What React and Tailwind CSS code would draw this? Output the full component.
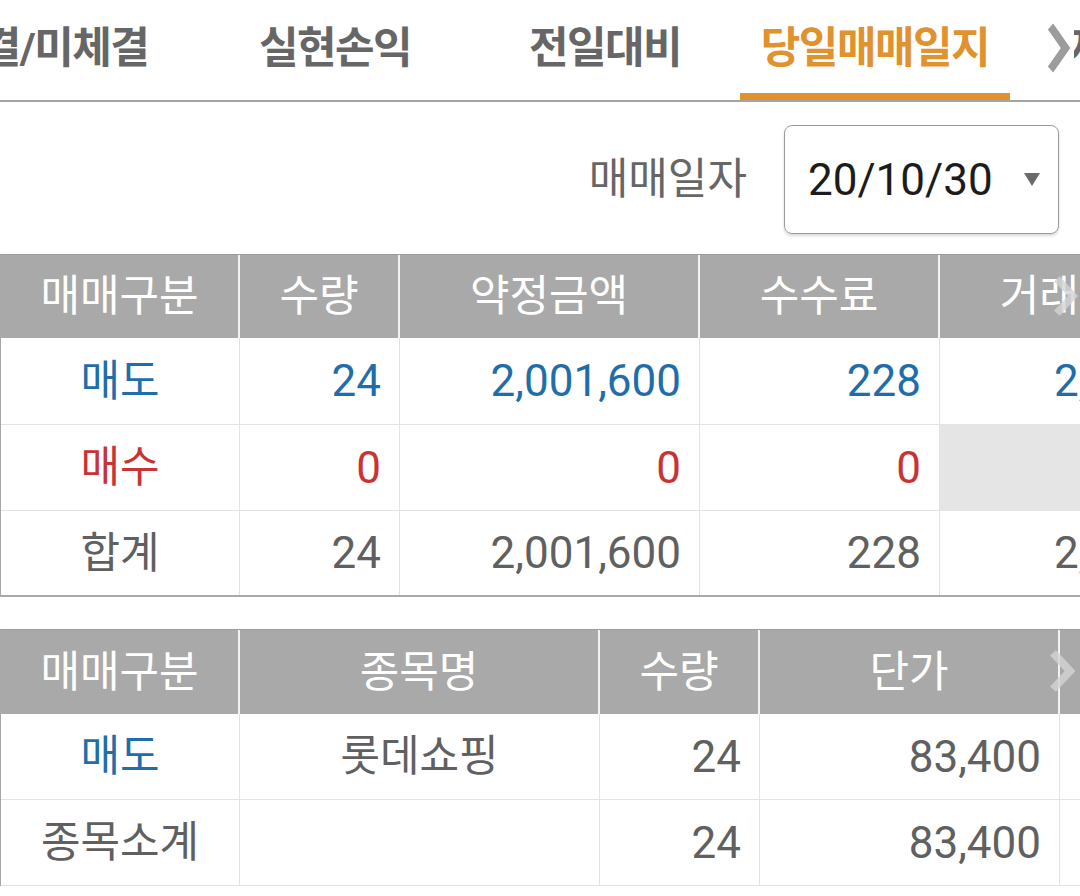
import React from "react";

const FONT = "font-['Roboto','Noto_Sans_CJK_KR',sans-serif]";

const Chevron = ({ className, stroke = "#c8c8c8", width = 9 }) => (
  <svg viewBox="0 0 26 44" preserveAspectRatio="none" className={className} fill="none">
    <path d="M4 3 L21 22 L4 41" stroke={stroke} strokeWidth={width} strokeLinecap="butt" strokeLinejoin="miter" />
  </svg>
);

const Tab = ({ label, active }) => (
  <div className="relative w-[270px] shrink-0 h-full flex items-center justify-center pb-[4px]">
    <span
      className={`text-[43px] font-bold tracking-[-1.5px] ${active ? "text-[#e0922f]" : "text-[#666666]"}`}
    >
      {label}
    </span>
    {active && <div className="absolute left-0 right-0 bottom-0 h-[7px] bg-[#e0922f]" />}
  </div>
);

const HeadCell = ({ w, children }) => (
  <div className={`${w} shrink-0 h-full flex items-center justify-center border-r-2 border-[#f2f2f2] text-white text-[43px]`}>
    {children}
  </div>
);

const Cell = ({ w, children, className = "" }) => (
  <div className={`${w} shrink-0 h-full flex items-center border-r border-[#e3e3e3] ${className}`}>
    {children}
  </div>
);

const Num = ({ w, color = "text-[#606060]", children, bg = "" }) => (
  <Cell w={w} className={`justify-end pr-[18px] text-[44px] ${color} ${bg}`}>
    {children}
  </Cell>
);

const Label = ({ w, color = "text-[#606060]", children }) => (
  <Cell w={w} className={`justify-center text-[43px] ${color}`}>
    {children}
  </Cell>
);

const BLUE = "text-[#1f6ea9]";
const RED = "text-[#c93333]";

export default function App() {
  return (
    <div className={`w-[1080px] h-[896px] overflow-hidden bg-white ${FONT}`}>
      {/* tabs */}
      <div className="relative h-[102px] border-b-2 border-[#a4a4a4] overflow-hidden">
        <div className="flex h-full -ml-[70px]">
          <Tab label="결/미체결" />
          <Tab label="실현손익" />
          <Tab label="전일대비" />
          <Tab label="당일매매일지" active />
          <div className="w-[270px] shrink-0 h-full flex items-center pl-[58px] pb-[4px]">
            <span className="text-[43px] font-bold text-[#666666]">자산</span>
          </div>
        </div>
        <div className="absolute left-[1042px] top-[18px] w-[32px] h-[60px] bg-white flex items-center justify-center">
          <Chevron className="w-[23px] h-[50px]" stroke="#9c9c9c" width={8} />
        </div>
      </div>

      {/* date row */}
      <div className="flex justify-end items-center gap-[37px] pr-[21px] pt-[23px] pb-[20px]">
        <span className="text-[43px] text-[#666666]">매매일자</span>
        <div className="w-[275px] h-[109px] border border-[#9a9a9a] rounded-[8px] shadow-[0_2px_3px_rgba(0,0,0,0.15)] flex items-center justify-between pl-[23px] pr-[18px]">
          <span className="text-[44px] text-[#1c1c1c]">20/10/30</span>
          <svg viewBox="0 0 16 13" className="w-[16px] h-[13px]">
            <polygon points="0,0 16,0 8,13" fill="#6a6a6a" />
          </svg>
        </div>
      </div>

      {/* summary table */}
      <div className="relative overflow-hidden border-l border-[#a8a8a8]">
        <div className="w-[1200px]">
          <div className="flex h-[84px] bg-[#a9a9a9] border-t border-[#9c9c9c]">
            <HeadCell w="w-[239px]">매매구분</HeadCell>
            <HeadCell w="w-[160px]">수량</HeadCell>
            <HeadCell w="w-[300px]">약정금액</HeadCell>
            <HeadCell w="w-[240px]">수수료</HeadCell>
            <HeadCell w="w-[240px]">거래세</HeadCell>
          </div>
          <div className="flex h-[87px] border-b border-[#e3e3e3]">
            <Label w="w-[239px]" color={BLUE}>매도</Label>
            <Num w="w-[160px]" color={BLUE}>24</Num>
            <Num w="w-[300px]" color={BLUE}>2,001,600</Num>
            <Num w="w-[240px]" color={BLUE}>228</Num>
            <Cell w="w-[240px]" className={`pl-[114px] text-[44px] ${BLUE}`}>2,</Cell>
          </div>
          <div className="flex h-[86px] border-b border-[#e3e3e3]">
            <Label w="w-[239px]" color={RED}>매수</Label>
            <Num w="w-[160px]" color={RED}>0</Num>
            <Num w="w-[300px]" color={RED}>0</Num>
            <Num w="w-[240px]" color={RED}>0</Num>
            <Cell w="w-[240px]" className="bg-[#e5e5e5]" />
          </div>
          <div className="flex h-[86px] border-b-2 border-[#a8a8a8]">
            <Label w="w-[239px]">합계</Label>
            <Num w="w-[160px]">24</Num>
            <Num w="w-[300px]">2,001,600</Num>
            <Num w="w-[240px]">228</Num>
            <Cell w="w-[240px]" className="pl-[114px] text-[44px] text-[#606060]">2,</Cell>
          </div>
        </div>
        <Chevron className="absolute left-[1052px] top-[22px] w-[25px] h-[40px] opacity-80" stroke="#d4d4d4" width={8} />
      </div>

      {/* detail table */}
      <div className="relative overflow-hidden border-l border-[#a8a8a8] mt-[32px]">
        <div className="w-[1300px]">
          <div className="flex h-[85px] bg-[#a9a9a9] border-t border-[#9c9c9c]">
            <HeadCell w="w-[239px]">매매구분</HeadCell>
            <HeadCell w="w-[360px]">종목명</HeadCell>
            <HeadCell w="w-[160px]">수량</HeadCell>
            <HeadCell w="w-[300px]">단가</HeadCell>
            <HeadCell w="w-[240px]">금액</HeadCell>
          </div>
          <div className="flex h-[86px] border-b border-[#e3e3e3]">
            <Label w="w-[239px]" color={BLUE}>매도</Label>
            <Label w="w-[360px]">롯데쇼핑</Label>
            <Num w="w-[160px]">24</Num>
            <Num w="w-[300px]">83,400</Num>
            <Cell w="w-[240px]" />
          </div>
          <div className="flex h-[86px] border-b border-[#e3e3e3]">
            <Label w="w-[239px]">종목소계</Label>
            <Cell w="w-[360px]" />
            <Num w="w-[160px]">24</Num>
            <Num w="w-[300px]">83,400</Num>
            <Cell w="w-[240px]" />
          </div>
        </div>
        <Chevron className="absolute left-[1048px] top-[21px] w-[26px] h-[42px] opacity-80" stroke="#d4d4d4" width={8} />
      </div>
    </div>
  );
}
